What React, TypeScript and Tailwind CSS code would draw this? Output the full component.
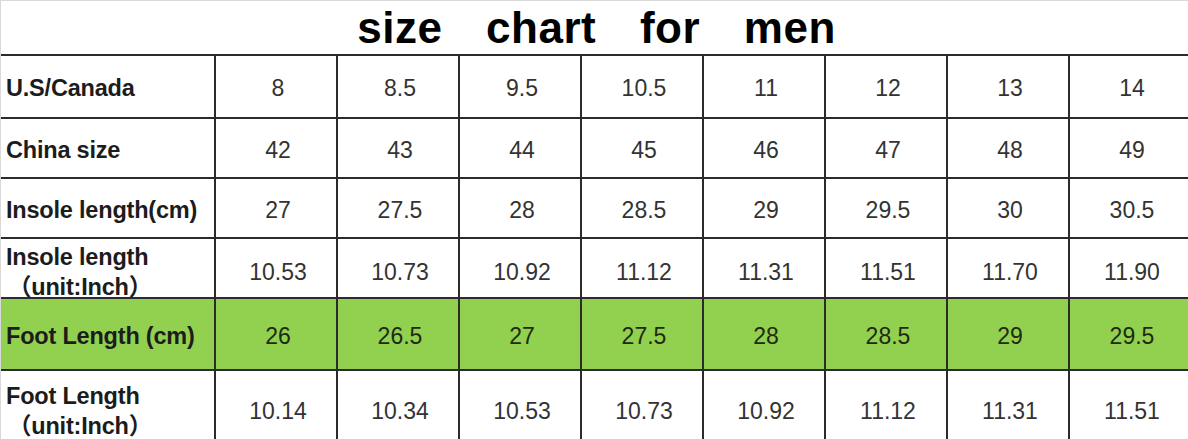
const columns = ['8', '8.5', '9.5', '10.5', '11', '12', '13', '14'];

type Row = {
  label: string[];
  values: string[];
  height: string;
  green?: boolean;
};

const rows: Row[] = [
  { label: ['U.S/Canada'], values: columns, height: 'h-[63px]' },
  { label: ['China size'], values: ['42', '43', '44', '45', '46', '47', '48', '49'], height: 'h-[60px]' },
  { label: ['Insole length(cm)'], values: ['27', '27.5', '28', '28.5', '29', '29.5', '30', '30.5'], height: 'h-[60px]' },
  {
    label: ['Insole length', '（unit:Inch）'],
    values: ['10.53', '10.73', '10.92', '11.12', '11.31', '11.51', '11.70', '11.90'],
    height: 'h-[60px]',
  },
  {
    label: ['Foot Length (cm)'],
    values: ['26', '26.5', '27', '27.5', '28', '28.5', '29', '29.5'],
    height: 'h-[72px]',
    green: true,
  },
  {
    label: ['Foot Length', '（unit:Inch）'],
    values: ['10.14', '10.34', '10.53', '10.73', '10.92', '11.12', '11.31', '11.51'],
    height: 'h-[78px]',
  },
];

const App = () => {
  return (
    <div className="w-[1188px] h-[439px] overflow-hidden bg-white font-['Liberation_Sans','Noto_Sans_CJK_SC',sans-serif]">
      <div className="relative w-[1191px] border-t border-[#d9d9d9]">
        <div className="absolute left-0 top-0 bottom-0 w-px bg-[#d9d9d9]" />
        <div className="h-[53px] flex items-center justify-center pl-[2px] pt-[1px]">
          <h1 className="text-[44px] font-black text-black leading-none [word-spacing:31px] tracking-[0.5px]">
            size chart for men
          </h1>
        </div>

        <div className="border-t-2 border-[#2b2b2b]">
          {rows.map((row, i) => (
            <div
              key={i}
              className={`grid grid-cols-[214px_repeat(8,122px)] border-b-2 border-[#2b2b2b] ${row.height} ${
                row.green ? 'bg-[#92d050]' : 'bg-white'
              }`}
            >
              <div className="flex flex-col justify-center pl-[6px] pt-[3px] text-[23.5px] font-bold text-[#1c1c1c] leading-[30px] tracking-[-0.2px]">
                {row.label.map((line, j) => (
                  <span key={j} className={j > 0 ? 'ml-[2px]' : ''}>
                    {line}
                  </span>
                ))}
              </div>
              {row.values.map((v, j) => (
                <div
                  key={j}
                  className={`flex items-center justify-center border-l-2 border-[#2b2b2b] pt-[4px] pl-[4px] text-[23px] ${
                    row.green ? 'text-[#1f2a12]' : 'text-[#333333]'
                  }`}
                >
                  {v}
                </div>
              ))}
            </div>
          ))}
        </div>
      </div>
    </div>
  );
};

export default App;
